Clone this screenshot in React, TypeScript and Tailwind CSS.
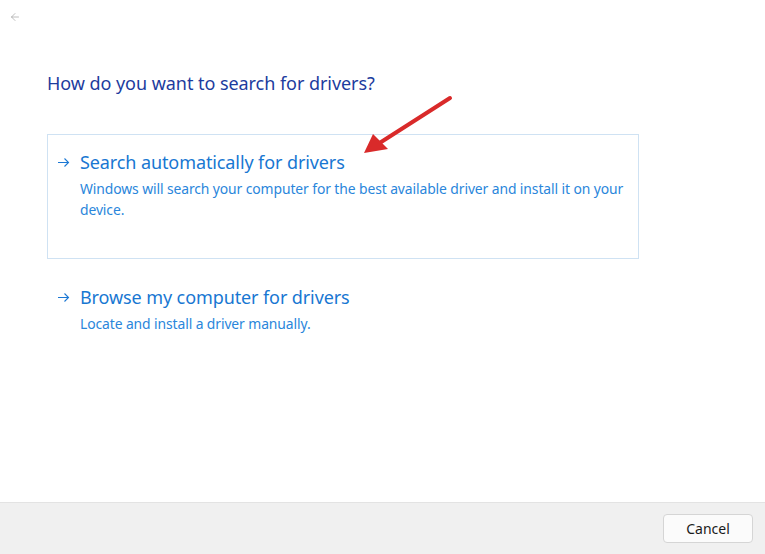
import { ArrowLeft } from 'lucide-react';

const font = { fontFamily: '"Segoe UI", "Noto Sans", sans-serif' };

function Option({ title, desc, boxed }: { title: string; desc: React.ReactNode; boxed?: boolean }) {
  return (
    <div
      className={`flex pl-[9px] pr-[6px] ${
        boxed ? 'h-[125px] border border-[#cfe2f3] pt-[14px]' : 'h-[80px] border border-transparent pt-[24px]'
      }`}
    >
      <span className="w-[23px] shrink-0">
        <svg width="13" height="26" viewBox="0 0 13 26" className="text-[#1c78d4]">
          <path d="M1 13.5h10.5M7.5 9.5l4 4-4 4" fill="none" stroke="currentColor" strokeWidth="1.1" />
        </svg>
      </span>
      <div>
        <div className="text-[18px] leading-[26px] tracking-[-0.1px] text-[#1877d2]">{title}</div>
        <div className="mt-[3px] text-[13.9px] leading-[21px] tracking-[-0.1px] text-[#2a86db]">{desc}</div>
      </div>
    </div>
  );
}

export default function App() {
  return (
    <div className="relative flex h-[554px] w-[765px] flex-col overflow-hidden bg-white" style={font}>
      <div className="h-[36px] pl-[9px] pt-[11px]">
        <ArrowLeft size={12} strokeWidth={1.3} className="text-[#9a9a9a]" />
      </div>
      <div className="flex-1 pl-[47px] pr-[126px]">
        <h1 className="mt-[34px] text-[18px] leading-[26px] tracking-[-0.05px] text-[#1d3c9e]">
          How do you want to search for drivers?
        </h1>
        <div className="mt-[38px]">
          <Option
            boxed
            title="Search automatically for drivers"
            desc="Windows will search your computer for the best available driver and install it on your device."
          />
          <Option title="Browse my computer for drivers" desc="Locate and install a driver manually." />
        </div>
      </div>
      <div className="flex h-[52px] items-center justify-end border-t border-[#e3e3e3] bg-[#f0f0f0] pr-[12px]">
        <button className="h-[29px] w-[90px] rounded-[4px] border border-[#d5d5d5] bg-[#fbfbfb] text-[14px] text-[#1a1a1a]">
          Cancel
        </button>
      </div>
      {/* red annotation arrow */}
      <svg className="absolute left-0 top-0" width="765" height="554">
        <line x1="450" y1="98" x2="378" y2="144" stroke="#d92a2a" strokeWidth="4" strokeLinecap="round" />
        <polygon points="364,153 373,134 388,149" fill="#d92a2a" />
      </svg>
    </div>
  );
}
